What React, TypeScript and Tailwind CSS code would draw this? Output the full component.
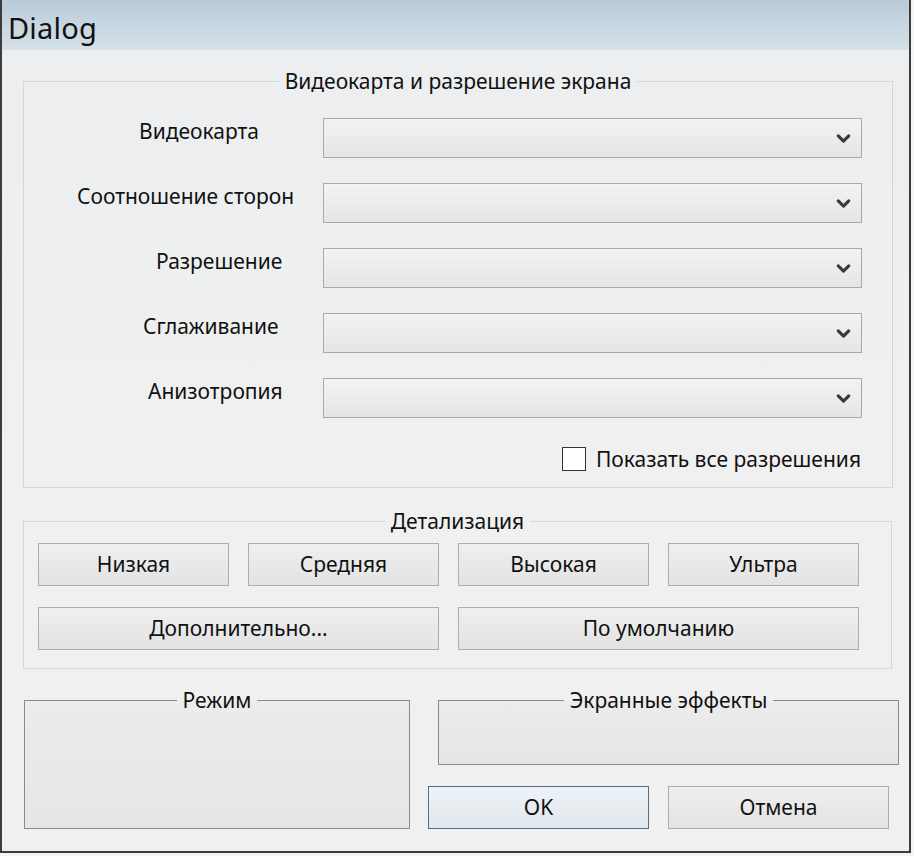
import { ChevronDown } from 'lucide-react';

const rows = [
  { label: 'Видеокарта', ml: 'ml-[115px]' },
  { label: 'Соотношение сторон', ml: 'ml-[53px]' },
  { label: 'Разрешение', ml: 'ml-[132px]' },
  { label: 'Сглаживание', ml: 'ml-[119px]' },
  { label: 'Анизотропия', ml: 'ml-[124px]' },
];

function Combo() {
  return (
    <div className="w-[539px] h-[40px] border border-[#a9a9a9] bg-gradient-to-b from-[#f3f3f3] to-[#e5e5e5] flex items-center justify-end pr-[7px]">
      <ChevronDown className="w-[21px] h-[21px] text-[#3a3a3a]" strokeWidth={3.6} />
    </div>
  );
}

function Btn({ children, w }: { children: string; w: string }) {
  return (
    <button className={`${w} h-[43px] border border-[#adadad] bg-gradient-to-b from-[#efefef] to-[#e3e3e3] text-[21px] text-[#111]`}>
      {children}
    </button>
  );
}

export default function App() {
  return (
    <div className="w-[914px] h-[856px] bg-[#f4f4f4]" style={{ fontFamily: '"Noto Sans", "Open Sans", sans-serif' }}>
      <div className="w-[911px] h-[853px] border-l-2 border-r-2 border-b-2 border-[#3c3c3c] flex flex-col">
        <div className="h-[50px] bg-gradient-to-b from-[#b9cbd9] to-[#d6e1e9] flex items-center pl-[6px] pt-[5px]">
          <span className="text-[29px] text-[#111] leading-none tracking-[0.2px]">Dialog</span>
        </div>
        <div className="flex-1 bg-gradient-to-b from-[#eceeef] to-[#f0f0f0] via-[#f0f0f0] pl-[21px]">
          <fieldset className="mt-[17px] w-[870px] h-[421px] border border-[#d6d6d6] text-[#111]">
            <legend className="mx-auto px-[6px] text-[21px] leading-[28px]">Видеокарта и разрешение экрана</legend>
            <div className="mt-[23px] flex flex-col gap-[25px]">
              {rows.map(r => (
                <div key={r.label} className="flex items-start h-[40px]">
                  <span className={`${r.ml} text-[21px] leading-[28px] -mt-[1px]`}>{r.label}</span>
                  <div className="ml-auto mr-[30px]"><Combo /></div>
                </div>
              ))}
            </div>
            <div className="mt-[27px] flex items-center justify-end mr-[31px] gap-[10px]">
              <span className="w-[24px] h-[24px] border border-[#333] bg-white" />
              <span className="text-[21px] leading-[28px]">Показать все разрешения</span>
            </div>
          </fieldset>

          <fieldset className="mt-[19px] w-[869px] h-[162px] border border-[#d6d6d6] text-[#111]">
            <legend className="mx-auto px-[6px] text-[21px] leading-[28px]">Детализация</legend>
            <div className="ml-[14px] mt-[8px] flex flex-col gap-[21px]">
              <div className="flex gap-[19px]">
                <Btn w="w-[191px]">Низкая</Btn>
                <Btn w="w-[191px]">Средняя</Btn>
                <Btn w="w-[191px]">Высокая</Btn>
                <Btn w="w-[191px]">Ультра</Btn>
              </div>
              <div className="flex gap-[19px]">
                <Btn w="w-[401px]">Дополнительно...</Btn>
                <Btn w="w-[401px]">По умолчанию</Btn>
              </div>
            </div>
          </fieldset>

          <div className="mt-[17px] flex items-start">
            <fieldset className="ml-[1px] w-[386px] h-[143px] border border-[#8a8a8a] bg-gradient-to-b from-[#ececec] to-[#e6e6e6] text-[#111]">
              <legend className="mx-auto px-[6px] text-[21px] leading-[28px]">Режим</legend>
            </fieldset>
            <div className="ml-[18px] flex flex-col">
              <fieldset className="ml-[10px] w-[461px] h-[79px] border border-[#8a8a8a] bg-gradient-to-b from-[#ececec] to-[#e6e6e6] text-[#111]">
                <legend className="mx-auto px-[6px] text-[21px] leading-[28px]">Экранные эффекты</legend>
              </fieldset>
              <div className="mt-[21px] flex gap-[19px]">
                <button className="w-[221px] h-[43px] border border-[#4f6f88] bg-gradient-to-b from-[#eef3f8] to-[#e2e7ec] text-[21px] text-[#111]">OK</button>
                <button className="w-[221px] h-[43px] border border-[#adadad] bg-gradient-to-b from-[#efefef] to-[#e3e3e3] text-[21px] text-[#111]">Отмена</button>
              </div>
            </div>
          </div>
        </div>
      </div>
    </div>
  );
}
